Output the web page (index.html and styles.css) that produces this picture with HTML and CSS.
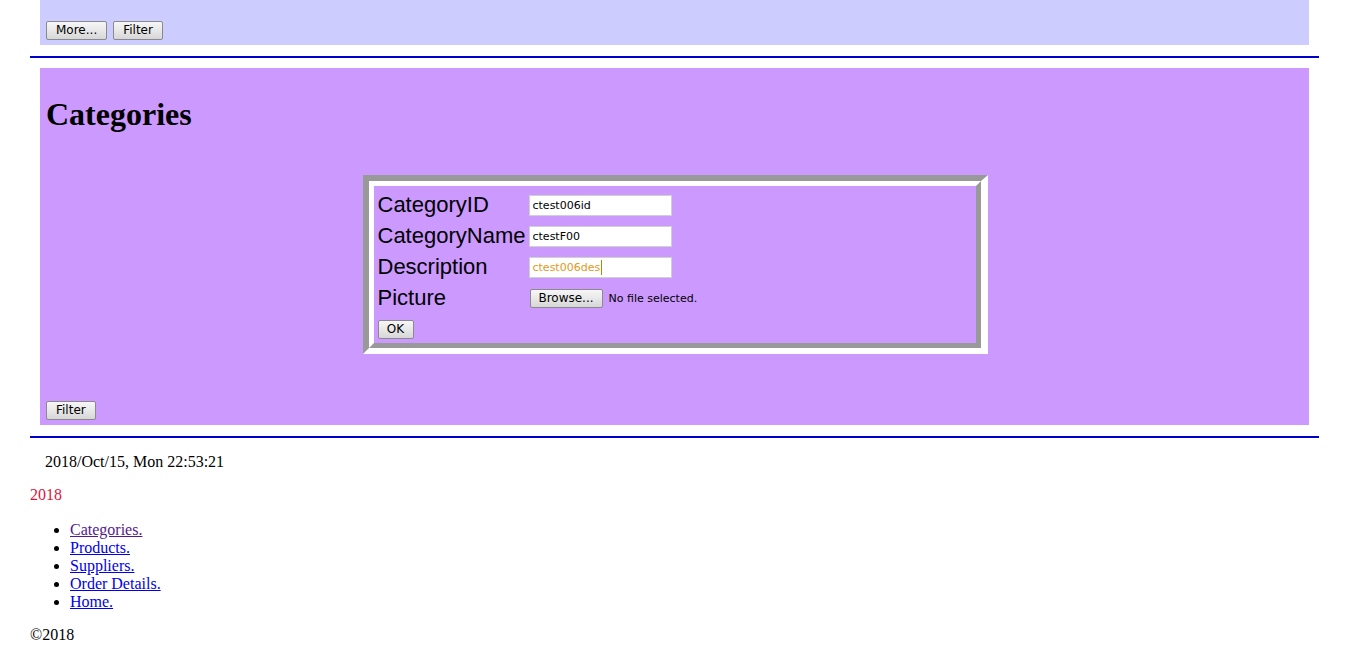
FILE: index.html
```html
<!DOCTYPE html>
<html>
<head>
<meta charset="utf-8">
<title>Categories</title>
<link rel="stylesheet" href="styles.css">
</head>
<body>
<div class="topbar">
  <button class="btn" type="button">More...</button>
  <button class="btn" type="button">Filter</button>
</div>
<hr class="rule">
<div class="panel">
  <h1 class="title">Categories</h1>
  <div class="formwrap">
    <div class="frame">
      <div class="frame-inner">
        <div class="row"><span class="lbl">CategoryID</span><input class="field" type="text" value="ctest006id"></div>
        <div class="row"><span class="lbl">CategoryName</span><input class="field" type="text" value="ctestF00"></div>
        <div class="row"><span class="lbl">Description</span><span class="field field-active">ctest006des<span class="caret"></span></span></div>
        <div class="row"><span class="lbl">Picture</span><span class="filepick"><button class="btn btn-browse" type="button">Browse...</button><span class="nofile">No file selected.</span></span></div>
        <div class="okrow"><button class="btn btn-ok" type="button">OK</button></div>
      </div>
    </div>
  </div>
  <div class="panel-foot"><button class="btn" type="button">Filter</button></div>
</div>
<hr class="rule rule-bottom">
<div class="date">2018/Oct/15, Mon 22:53:21</div>
<div class="year">2018</div>
<ul class="links">
  <li><a class="visited" href="#">Categories.</a></li>
  <li><a href="#">Products.</a></li>
  <li><a href="#">Suppliers.</a></li>
  <li><a href="#">Order Details.</a></li>
  <li><a href="#">Home.</a></li>
</ul>
<div class="copy">©2018</div>
</body>
</html>
```
FILE: styles.css
```css
html, body {
  background: #ffffff;
}
body {
  margin: 0 30px;
  font-family: "Liberation Serif", "Times New Roman", serif;
  font-size: 16px;
  color: #000;
}
.btn {
  font-family: "DejaVu Sans", Tahoma, sans-serif;
  font-size: 12px;
  color: #000;
  height: 19px;
  padding: 0 9px;
  margin: 0 2px 0 0;
  border: 1px solid #8a8a8a;
  border-radius: 2px;
  background: linear-gradient(#f6f6f6, #e8e8e8 50%, #d6d6d6);
  line-height: 17px;
  vertical-align: middle;
}
.topbar {
  margin: 0 10px;
  background: #ccccff;
  padding: 20px 6px 5px;
  height: 20px;
}
.rule {
  border: 0;
  border-top: 2px solid #0000cc;
  height: 0;
  margin: 11px 0 10px;
}
.rule-bottom {
  margin: 11px 0 0;
}
.panel {
  margin: 0 10px;
  background: #cc99ff;
  padding: 5px 6px 5px;
}
.title {
  font-size: 32px;
  font-weight: bold;
  margin: 23px 0 0;
  line-height: 37px;
}
.formwrap {
  display: flex;
  justify-content: center;
  margin-top: 42px;
  padding-left: 1px;
}
.frame {
  width: 612px;
  border-style: solid;
  border-width: 6px 7px 6px 6px;
  border-color: #999999 #ffffff #ffffff #999999;
}
.frame-inner {
  border-style: solid;
  border-width: 5px;
  border-color: #ffffff #999999 #999999 #ffffff;
  padding: 4px 2px 4px 4px;
}
.row {
  display: flex;
  align-items: center;
  height: 31px;
}
.lbl {
  width: 151px;
  font-family: "Liberation Sans", Arial, sans-serif;
  font-size: 22px;
  line-height: 25px;
  margin-top: -3px;
  white-space: nowrap;
}
.field {
  box-sizing: border-box;
  display: flex;
  align-items: center;
  width: 143px;
  height: 21px;
  border: 1px solid #d0d0d0;
  background: #fff;
  padding: 0 3px;
  margin: 0;
  font-family: "DejaVu Sans", Tahoma, sans-serif;
  font-size: 11px;
  color: #000;
  outline: none;
}
.field-active {
  color: #e09a1a;
}
.caret {
  display: inline-block;
  width: 1px;
  height: 15px;
  background: #c08000;
  margin-left: 1px;
}
.filepick {
  display: flex;
  align-items: center;
  margin-left: 1px;
}
.btn-browse {
  width: 73px;
  padding: 0;
  margin: 0 6px 0 0;
}
.nofile {
  font-family: "DejaVu Sans", Tahoma, sans-serif;
  font-size: 11px;
}
.okrow {
  padding-top: 5px;
  padding-left: 0;
}
.btn-ok {
  width: 36px;
  padding: 0;
}
.panel-foot {
  margin-top: 46px;
}
.date {
  padding-left: 15px;
  margin-top: 15px;
  line-height: 18px;
}
.year {
  color: #dc143c;
  margin-top: 15px;
  line-height: 18px;
}
.links {
  margin: 17px 0 0;
  padding-left: 40px;
  line-height: 18px;
}
.links a {
  color: #0000ee;
}
.links a.visited {
  color: #551a8b;
}
.copy {
  margin-top: 15px;
  line-height: 18px;
}
```
